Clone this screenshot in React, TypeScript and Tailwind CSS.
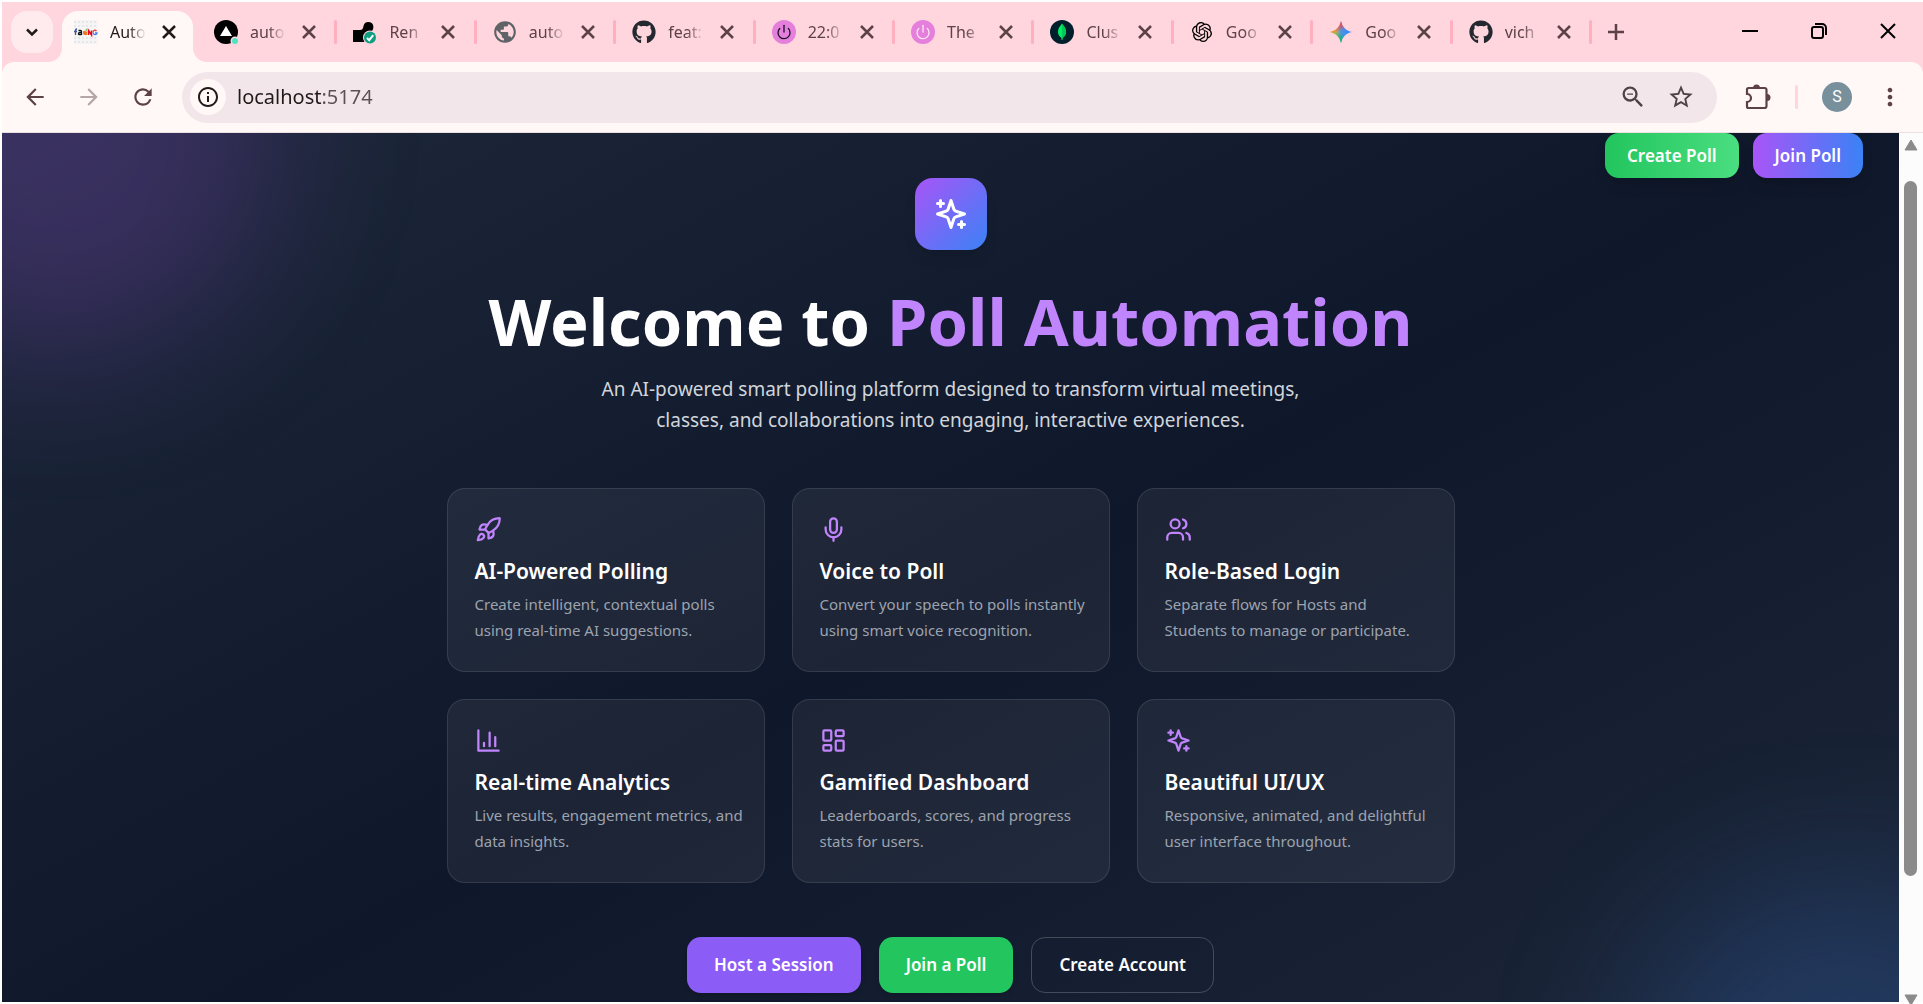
import React, { useState } from 'react'
import { LayoutDashboard, Mic, Power, Rocket, Users } from 'lucide-react'
import { FaGithub } from 'react-icons/fa'
import {
  MdArrowBack,
  MdArrowForward,
  MdInfoOutline,
  MdMoreVert,
  MdPublic,
  MdRefresh,
  MdStarBorder,
  MdZoomOut,
} from 'react-icons/md'
import { SiOpenai } from 'react-icons/si'

type IconProps = { className?: string }

const SparkleIcon = ({ className }: IconProps) => (
  <svg
    viewBox="0 0 24 24"
    fill="none"
    stroke="currentColor"
    strokeWidth="2"
    strokeLinecap="round"
    strokeLinejoin="round"
    className={className}
  >
    <path d="m12 3-1.912 5.813a2 2 0 0 1-1.275 1.275L3 12l5.813 1.912a2 2 0 0 1 1.275 1.275L12 21l1.912-5.813a2 2 0 0 1 1.275-1.275L21 12l-5.813-1.912a2 2 0 0 1-1.275-1.275L12 3Z" />
    <path d="M5 3v4M3 5h4M19 17v4M17 19h4" />
  </svg>
)

const ChartIcon = ({ className }: IconProps) => (
  <svg
    viewBox="0 0 24 24"
    fill="none"
    stroke="currentColor"
    strokeWidth="2"
    strokeLinecap="round"
    strokeLinejoin="round"
    className={className}
  >
    <path d="M3 3v18h18M18 17V9M13 17V5M8 17v-3" />
  </svg>
)

const FaangIcon = () => (
  <svg viewBox="0 0 24 24" className="size-6">
    <rect width="24" height="24" fill="#f6f4f4" />
    <path
      d="M0 2h24M0 6h24M0 18h24M0 22h24"
      stroke="#e3e8e8"
      strokeWidth="2"
      strokeDasharray="2 2"
    />
    <path d="M3 9c-1.500 0-1.500 1-1.500 2v4M0 11.500h3" fill="none" stroke="#3b5998" strokeWidth="1.300" />
    <path d="M4.500 10.500h2c1 0 1 .5 1 1V15M7.500 12.500H6c-2 0-2 2-.5 2h2" fill="none" stroke="#111" strokeWidth="1.300" />
    <path d="M9 12.500c0-2 1-2 2-1.500s2 .5 2 .5V15h-3c-1-1-1-1.500-1-2.500z" fill="#e8792b" />
    <path d="M11 10.500l2-2v2z" fill="#4caf50" />
    <path d="M14.500 15v-4.500l3 4.500v-4.500" fill="none" stroke="#e50914" strokeWidth="1.500" />
    <path d="M22.500 11c-1.500-1.500-3.500-.5-3.500 1.500" fill="none" stroke="#ea4335" strokeWidth="1.300" />
    <path d="M19 12.500c0 2.500 4 3 4 .5h-2" fill="none" stroke="#4285f4" strokeWidth="1.300" />
  </svg>
)

const DeployIcon = () => (
  <svg viewBox="0 0 24 24" className="size-6">
    <circle cx="12" cy="12" r="12" fill="#000" />
    <path d="M12 6l6 10H6z" fill="#fff" />
    <circle cx="21" cy="21" r="4.500" fill="#ffd6de" />
    <circle cx="21" cy="21" r="3" fill="#50e3c2" />
  </svg>
)

const RenderIcon = () => (
  <svg viewBox="0 0 24 24" className="size-6">
    <path
      d="M0 10h7c2.500 0 3-1.500 3.500-4a5 5 0 1 1 5.500 6c-3 .5-4.500 1.500-4.500 4v6H0z"
      fill="#000"
    />
    <circle cx="17" cy="17.500" r="7" fill="#ffd6de" />
    <circle cx="17" cy="17.500" r="6" fill="#0d9f80" />
    <path d="M14 18l2.200 2.200 4-5" fill="none" stroke="#fff" strokeWidth="2" />
  </svg>
)

const MongoIcon = () => (
  <svg viewBox="0 0 24 24" className="size-6">
    <circle cx="12" cy="12" r="12" fill="#001e2b" />
    <path
      d="M12 3.500c1 2 4 4 4 8.500 0 3-1.500 4.500-3.300 5.800L12.400 20h-.8l-.3-2.200C9.500 16.500 8 15 8 12c0-4.500 3-6.500 4-8.500z"
      fill="#00ed64"
    />
    <path d="M12 3.500c1 2 4 4 4 8.500 0 3-1.500 4.500-3.300 5.800L12 20z" fill="#00c957" />
  </svg>
)

const GeminiIcon = () => (
  <svg viewBox="0 0 24 24" className="size-6">
    <defs>
      <linearGradient id="gem-x" x1="0" x2="1" y1="0" y2="0">
        <stop offset="0" stopColor="#fbbc04" />
        <stop offset="0.250" stopColor="#e0b83a" />
        <stop offset="0.500" stopColor="#4a93e8" />
        <stop offset="1" stopColor="#3186ff" />
      </linearGradient>
      <linearGradient id="gem-top" x1="0.400" x2="0.550" y1="0" y2="0.450">
        <stop offset="0.300" stopColor="#f94543" />
        <stop offset="1" stopColor="#f94543" stopOpacity="0" />
      </linearGradient>
      <linearGradient id="gem-bottom" x1="0.400" x2="0.550" y1="1" y2="0.550">
        <stop offset="0.200" stopColor="#08b962" />
        <stop offset="1" stopColor="#08b962" stopOpacity="0" />
      </linearGradient>
    </defs>
    {['gem-x', 'gem-bottom', 'gem-top'].map((id) => (
      <path
        key={id}
        d="M12 1c1.400 6.200 4.800 9.600 11 11-6.200 1.400-9.600 4.800-11 11-1.400-6.200-4.800-9.600-11-11 6.200-1.400 9.600-4.800 11-11z"
        fill={`url(#${id})`}
      />
    ))}
  </svg>
)

const PuzzleIcon = () => (
  <svg viewBox="0 0 26 26" className="size-[26px]">
    <path
      d="M3.500 4h16a2 2 0 0 1 2 2v16a2 2 0 0 1-2 2h-16a1.500 1.500 0 0 1-1.500-1.500V18a4 4 0 0 0 0-8V5.500A1.500 1.500 0 0 1 3.500 4z"
      fill="none"
      stroke="#5c4147"
      strokeWidth="2.200"
    />
    <path d="M8 4a3.500 3.500 0 0 1 7 0zM22 10a3.500 3.500 0 0 1 0 7z" fill="#5c4147" />
  </svg>
)

const CloseIcon = () => (
  <svg viewBox="0 0 14 14" className="size-[14px]">
    <path d="M1 1l12 12M13 1L1 13" stroke="currentColor" strokeWidth="2.500" />
  </svg>
)

const tabs = [
  { title: 'auto', icon: <DeployIcon /> },
  { title: 'Ren', icon: <RenderIcon /> },
  { title: 'auto', icon: <MdPublic className="size-[26px] shrink-0 text-[#5f6368]" /> },
  { title: 'feat:', icon: <FaGithub className="size-6 text-[#24292f]" /> },
  {
    title: '22:0',
    icon: (
      <span className="flex size-6 items-center justify-center rounded-full bg-[#e57fdc]">
        <Power className="size-4 text-[#1d1029]" />
      </span>
    ),
  },
  {
    title: 'The',
    icon: (
      <span className="flex size-6 items-center justify-center rounded-full bg-[#e57fdc]">
        <Power className="size-4 text-[#ffe3f4]" />
      </span>
    ),
  },
  { title: 'Clus', icon: <MongoIcon /> },
  { title: 'Goo', icon: <SiOpenai className="size-5 text-black" /> },
  { title: 'Goo', icon: <GeminiIcon /> },
  { title: 'vich', icon: <FaGithub className="size-6 text-[#24292f]" /> },
]

const features = [
  {
    icon: Rocket,
    title: 'AI-Powered Polling',
    lines: ['Create intelligent, contextual polls', 'using real-time AI suggestions.'],
  },
  {
    icon: Mic,
    title: 'Voice to Poll',
    lines: ['Convert your speech to polls instantly', 'using smart voice recognition.'],
  },
  {
    icon: Users,
    title: 'Role-Based Login',
    lines: ['Separate flows for Hosts and', 'Students to manage or participate.'],
  },
  {
    icon: ChartIcon,
    title: 'Real-time Analytics',
    lines: ['Live results, engagement metrics, and', 'data insights.'],
  },
  {
    icon: LayoutDashboard,
    title: 'Gamified Dashboard',
    lines: ['Leaderboards, scores, and progress', 'stats for users.'],
  },
  {
    icon: SparkleIcon,
    title: 'Beautiful UI/UX',
    lines: ['Responsive, animated, and delightful', 'user interface throughout.'],
  },
]

function TabTitle({ children }: { children: string }) {
  return (
    <span className="ml-3 w-9 text-base whitespace-nowrap [mask-image:linear-gradient(to_right,black_50%,transparent)]">
      {children}
    </span>
  )
}

function TabStrip() {
  return (
    <div className="flex h-[60px] items-start justify-between bg-[#ffd6de] pl-[9px]">
      <div className="flex items-start">
        <button
          aria-label="Search tabs"
          className="mt-[9px] flex size-[42px] items-center justify-center rounded-2xl bg-[#ffebee]"
        >
          <svg viewBox="0 0 14 14" className="size-[14px]">
            <path d="M2 4.500l5 5 5-5" fill="none" stroke="#201a1b" strokeWidth="2.500" />
          </svg>
        </button>
        <div className="relative mt-[9px] ml-[9px] flex h-[51px] w-[131px] items-center rounded-t-2xl bg-[#fff8f7] pb-[9px] pl-3 text-[#201a1b]">
          <svg viewBox="0 0 14 14" className="absolute bottom-0 -left-[14px] size-[14px]">
            <path d="M14 0v14H0A14 14 0 0 0 14 0z" fill="#fff8f7" />
          </svg>
          <svg viewBox="0 0 14 14" className="absolute -right-[14px] bottom-0 size-[14px]">
            <path d="M0 0v14h14A14 14 0 0 1 0 0z" fill="#fff8f7" />
          </svg>
          <FaangIcon />
          <TabTitle>Auto</TabTitle>
          <button aria-label="Close tab" className="ml-4">
            <CloseIcon />
          </button>
        </div>
        <div className="ml-[5px] flex h-[60px] w-[1394px] text-[#5c4147]">
          {tabs.map((tab, i) => (
            <div key={i} className="flex flex-1 items-center pl-4">
              <span className="flex size-6 items-center justify-center">{tab.icon}</span>
              <TabTitle>{tab.title}</TabTitle>
              <button aria-label="Close tab" className="ml-4">
                <CloseIcon />
              </button>
              <span className="ml-auto h-6 w-[3px] rounded-full bg-[#ffafbd]" />
            </div>
          ))}
        </div>
        <button aria-label="New tab" className="mt-[22px] ml-4 text-[#5c4147]">
          <svg viewBox="0 0 16 16" className="size-4">
            <path d="M8 0v16M0 8h16" stroke="currentColor" strokeWidth="2.500" />
          </svg>
        </button>
      </div>
      <div className="flex items-center gap-[53px] pt-[21px] pr-[27px] text-black">
        <button aria-label="Minimize">
          <svg viewBox="0 0 16 16" className="size-4">
            <path d="M0 8h16" stroke="currentColor" strokeWidth="2" />
          </svg>
        </button>
        <button aria-label="Restore">
          <svg viewBox="0 0 16 16" className="size-4">
            <rect x="1" y="4" width="11" height="11" rx="2" fill="none" stroke="currentColor" strokeWidth="2" />
            <path d="M4 1h7a4 4 0 0 1 4 4v7" fill="none" stroke="currentColor" strokeWidth="2" />
          </svg>
        </button>
        <button aria-label="Close window">
          <svg viewBox="0 0 16 16" className="size-4">
            <path d="M1 1l14 14M15 1L1 15" stroke="currentColor" strokeWidth="2" />
          </svg>
        </button>
      </div>
    </div>
  )
}

function Toolbar() {
  const [url, setUrl] = useState('localhost:5174')

  return (
    <div className="bg-[#ffd6de]">
      <div className="flex h-[71px] items-center rounded-t-xl border-b border-[#ecdfe1] bg-[#fff8f7] pl-5 text-[#5c4147]">
        <button aria-label="Back">
          <MdArrowBack className="size-[26px]" />
        </button>
        <button aria-label="Forward" className="ml-7 text-[#b5a6a8]">
          <MdArrowForward className="size-[26px]" />
        </button>
        <button aria-label="Reload" className="ml-7">
          <MdRefresh className="size-[26px]" />
        </button>
        <div className="ml-[26px] flex h-[51px] flex-1 items-center rounded-full bg-[#f2e6ea] pr-[22px] pl-2">
          <span className="flex size-9 items-center justify-center rounded-full bg-[#fff8f7]">
            <MdInfoOutline className="size-6 text-[#201a1b]" />
          </span>
          <input
            aria-label="Address"
            value={url}
            onChange={(e) => setUrl(e.target.value)}
            className="ml-[11px] flex-1 bg-linear-to-r from-[#201a1b] from-[84px] to-[#5f4f53] to-[84px] bg-clip-text text-xl text-transparent outline-none"
          />
          <button aria-label="Zoom" className="text-[#4f4044]">
            <MdZoomOut className="size-7" />
          </button>
          <button aria-label="Bookmark" className="ml-5 text-[#4f4044]">
            <MdStarBorder className="size-7" />
          </button>
        </div>
        <button aria-label="Extensions" className="ml-[28px]">
          <PuzzleIcon />
        </button>
        <span className="ml-6 h-6 w-[3px] rounded-full bg-[#ffd6de]" />
        <button
          aria-label="Profile"
          className="ml-6 size-[30px] rounded-full bg-[#78909c] font-['Roboto',sans-serif] text-base text-white"
        >
          S
        </button>
        <button aria-label="Menu" className="mr-[19px] ml-6">
          <MdMoreVert className="size-7" />
        </button>
      </div>
    </div>
  )
}

function Scrollbar() {
  return (
    <div className="flex w-6 flex-col items-center bg-[#fcfcfc] pr-px">
      <svg viewBox="0 0 14 12" className="mt-[6px] h-3 w-[14px]">
        <path d="M7 1l6 10H1z" fill="#8b8b8b" stroke="#8b8b8b" strokeLinejoin="round" />
      </svg>
      <div className="mt-[30px] h-[80%] w-[13px] rounded-full bg-[#8b8b8b]" />
      <svg viewBox="0 0 14 12" className="mt-auto -mb-1 h-3 w-[14px] shrink-0">
        <path d="M7 11l6-10H1z" fill="#8b8b8b" stroke="#8b8b8b" strokeLinejoin="round" />
      </svg>
    </div>
  )
}

function Home() {
  return (
    <div className="relative min-w-0 flex-1 overflow-hidden">
      {/* Background layer with the two glowing blobs */}
      <div className="absolute inset-x-0 -top-[26px] -bottom-[125px] bg-linear-to-br/srgb from-[#1e293b] via-[#0f172a] to-[#1e293b]">
        <div className="absolute -top-[180px] -left-[160px] size-[432px] rounded-full bg-[#a855f7]/20 blur-[72px]" />
        <div className="absolute -right-[160px] -bottom-[180px] size-[432px] rounded-full bg-[#3b82f6]/20 blur-[72px]" />
      </div>

      <div className="relative">
        <nav className="flex justify-end gap-[14px] pr-9 text-[17px] font-semibold text-white">
          <button className="h-[45px] rounded-[14px] bg-linear-to-r/srgb from-[#22c55e] to-[#4ade80] px-[22px] shadow-lg">
            Create Poll
          </button>
          <button className="h-[45px] rounded-[14px] bg-linear-to-r/srgb from-[#a855f7] to-[#3b82f6] px-[22px] shadow-lg">
            Join Poll
          </button>
        </nav>

        <main className="mx-auto max-w-[1008px] text-center">
          <div className="mx-auto flex size-[72px] items-center justify-center rounded-[18px] bg-linear-to-br/srgb from-[#a855f7] to-[#3b82f6] shadow-lg">
            <SparkleIcon className="size-9 text-white" />
          </div>
          <h1 className="mt-9 text-[65px] leading-[70px] font-bold whitespace-nowrap text-white">
            Welcome to <span className="text-[#c084fc]">Poll Automation</span>
          </h1>
          <p className="mt-[18px] text-[19px] leading-[31px] text-[#d1d5db]">
            An AI-powered smart polling platform designed to transform virtual meetings,
            <br />
            classes, and collaborations into engaging, interactive experiences.
          </p>

          <div className="mt-[52px] grid grid-cols-3 gap-[27px] text-left">
            {features.map(({ icon: Icon, title, lines }) => (
              <div
                key={title}
                className="h-[184px] rounded-[18px] border border-white/10 bg-white/6 p-[27px]"
              >
                <Icon className="size-[27px] text-[#c084fc]" />
                <h3 className="mt-3 text-[21px] leading-8 font-semibold whitespace-nowrap text-white">
                  {title}
                </h3>
                <p className="mt-1 text-[15px] leading-[26px] whitespace-nowrap text-[#9ca3af]">
                  {lines[0]}
                  <br />
                  {lines[1]}
                </p>
              </div>
            ))}
          </div>

          <div className="mt-[54px] flex justify-center gap-[18px] text-[17px] font-semibold text-white">
            <button className="h-14 rounded-[14px] bg-[#8b5cf6] px-[27px] shadow-md">
              Host a Session
            </button>
            <button className="h-14 rounded-[14px] bg-[#22c55e] px-[27px] shadow-md">
              Join a Poll
            </button>
            <button className="h-14 rounded-[14px] border border-white/20 px-[27px]">
              Create Account
            </button>
          </div>
        </main>
      </div>
    </div>
  )
}

export default function App() {
  return (
    <div className="flex h-screen flex-col bg-white pt-[2px] pb-[2px] pl-[2px] font-['Noto_Sans',sans-serif]">
      <TabStrip />
      <Toolbar />
      <div className="flex min-h-0 flex-1">
        <Home />
        <Scrollbar />
      </div>
    </div>
  )
}
